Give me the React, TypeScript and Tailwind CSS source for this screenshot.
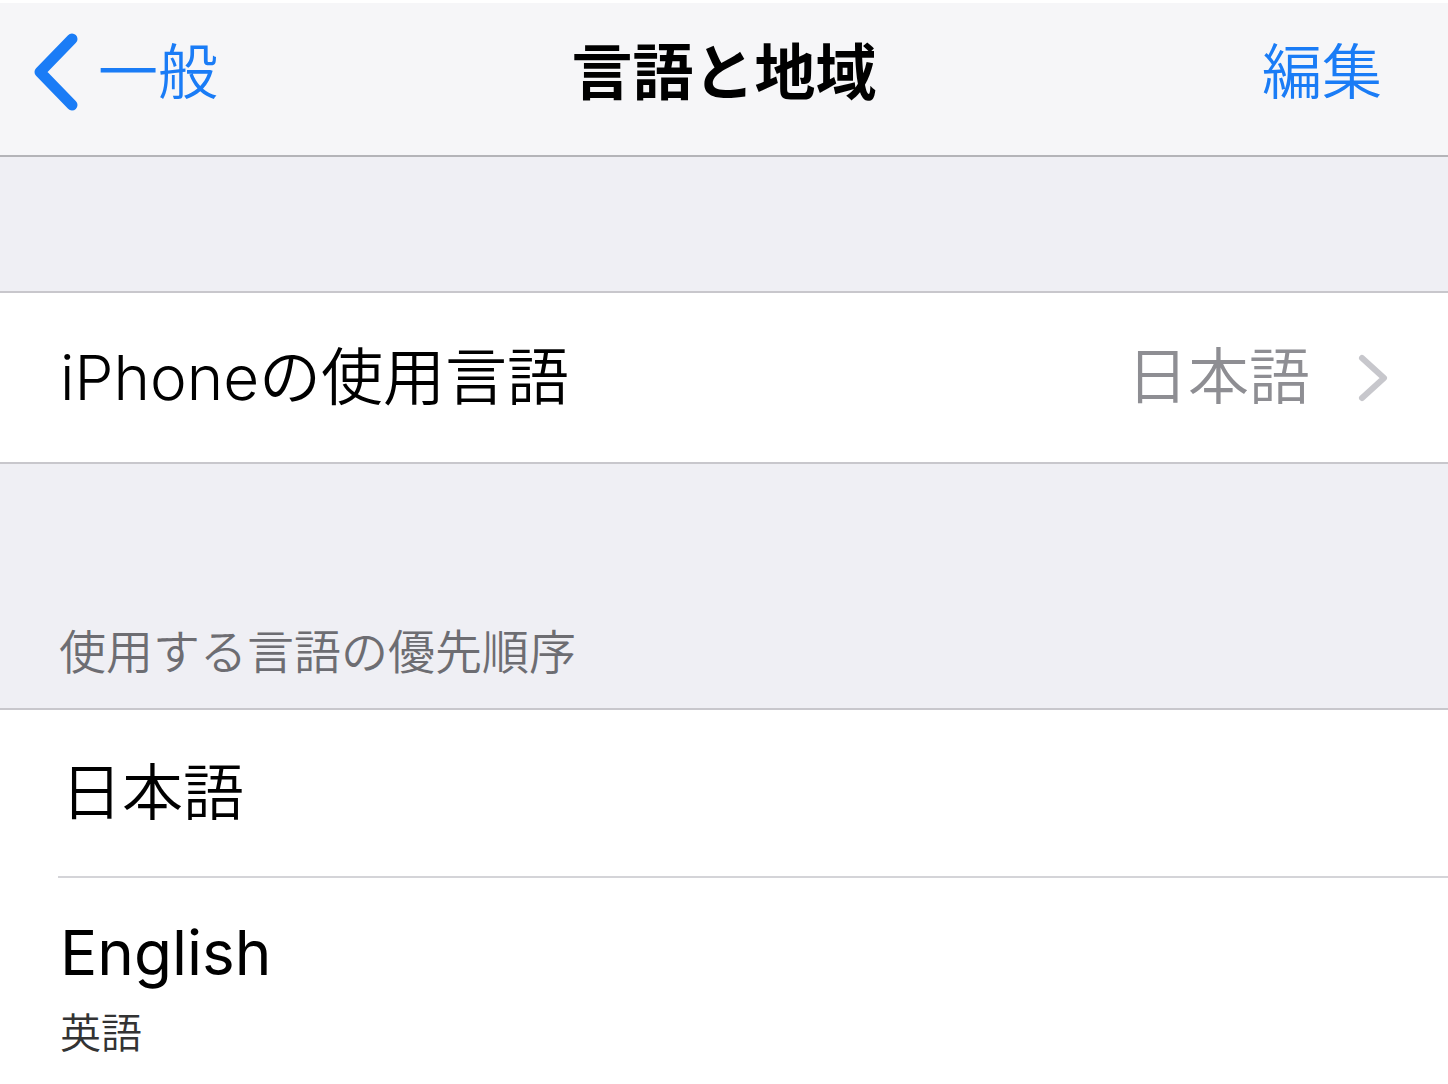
import { FC } from "react";

const font = "font-['Inter','Noto_Sans_CJK_JP',sans-serif]";

const BackChevron: FC = () => (
  <svg width="52" height="82" viewBox="0 0 52 82" fill="none" className="shrink-0">
    <path
      d="M42 8 L10 41 L42 74"
      stroke="#1a7cf6"
      strokeWidth="11"
      strokeLinecap="round"
      strokeLinejoin="round"
    />
  </svg>
);

const RowChevron: FC = () => (
  <svg width="34" height="50" viewBox="0 0 34 50" fill="none" className="shrink-0">
    <path
      d="M6 5 L28 25 L6 45"
      stroke="#c7c7cc"
      strokeWidth="6"
      strokeLinecap="round"
      strokeLinejoin="round"
    />
  </svg>
);

const App: FC = () => {
  return (
    <div className={`w-full h-[1084px] overflow-hidden bg-[#efeff4] ${font}`}>
      {/* nav bar */}
      <div className="h-[3px] bg-white" />
      <nav className="relative h-[154px] bg-[#f6f6f8] border-b-2 border-[#b4b4b8] flex items-center justify-between pb-[14px]">
        <div className="flex items-center pl-[30px] gap-[16px] text-[#1a7cf6]">
          <BackChevron />
          <span className="text-[60px] leading-none font-[350]">一般</span>
        </div>
        <span className="absolute left-1/2 -translate-x-1/2 top-[40px] text-[61px] leading-none font-bold text-black">
          言語と地域
        </span>
        <span className="pr-[66px] text-[60px] leading-none font-[350] text-[#1a7cf6]">編集</span>
      </nav>

      {/* spacer */}
      <div className="h-[134px]" />

      {/* device language */}
      <div className="bg-white border-y-2 border-[#c8c7cc] h-[173px] flex items-center pl-[60px] pr-[58px]">
        <span className="text-[62px] leading-none font-[350] text-black">iPhoneの使用言語</span>
        <span className="ml-auto text-[61px] leading-none font-[350] text-[#8e8e93]">日本語</span>
        <div className="ml-[46px]">
          <RowChevron />
        </div>
      </div>

      {/* section header */}
      <div className="h-[244px] flex items-end pl-[59px] pb-[33px]">
        <span className="text-[47px] leading-none font-[350] text-[#6d6d72]">使用する言語の優先順序</span>
      </div>

      {/* preferred languages */}
      <div className="bg-white border-t-2 border-[#c8c7cc]">
        <div className="h-[166px] flex items-center pl-[61px]">
          <span className="text-[61px] leading-none font-[350] text-black">日本語</span>
        </div>
        <div className="ml-[58px] h-[2px] bg-[#d4d4d8]" />
        <div className="pl-[60px] pt-[44px] pb-[40px] flex flex-col">
          <span className="text-[62px] leading-none text-black">English</span>
          <span className="mt-[29px] text-[41px] leading-none font-[350] text-[#333]">英語</span>
        </div>
      </div>
    </div>
  );
};

export default App;
